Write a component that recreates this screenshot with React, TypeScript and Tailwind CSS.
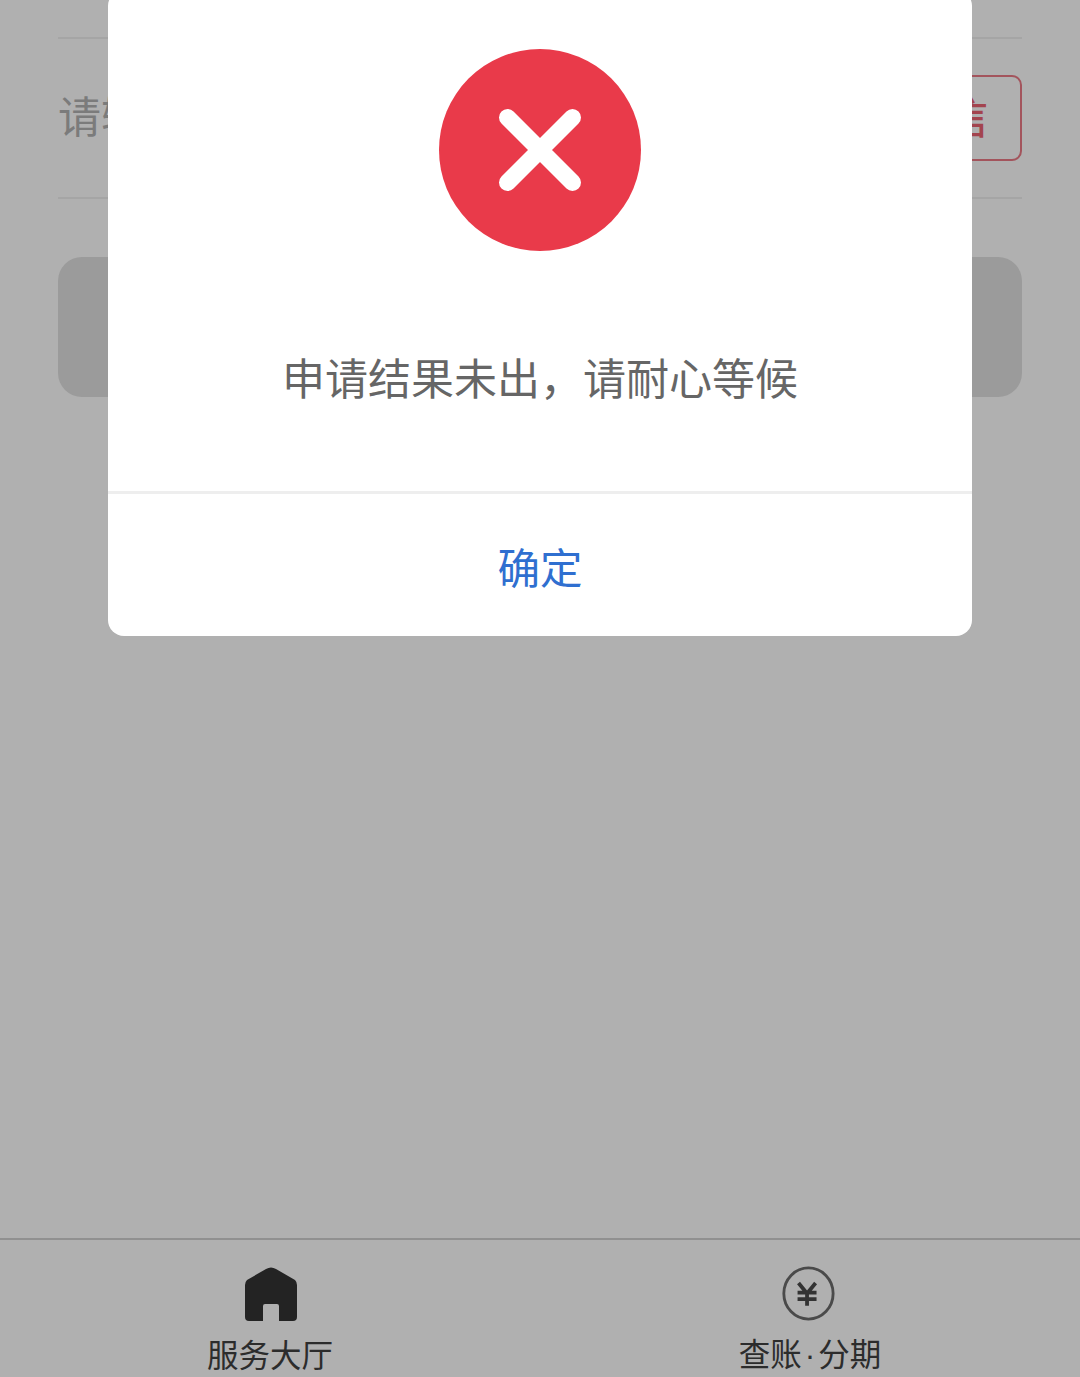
export default function App() {
  const cjk = "font-['Noto_Sans_CJK_SC','Noto_Sans',sans-serif]";
  return (
    <div className={`relative h-[1377px] w-[1080px] overflow-hidden bg-[#b0b0b0] flex flex-col ${cjk}`}>
      <main className="flex-1 px-[58px] pt-[37px]">
        <div className="flex h-[162px] items-center justify-between border-y-2 border-[#a5a5a5]">
          <span className="pb-[8px] text-[43px] leading-none text-[#7b7b7b]">请输入短信验证码</span>
          <button className="flex h-[86px] items-center rounded-[10px] border-2 border-[#a3545c] pl-[34px] pr-[32px] pb-[6px] text-[43px] font-medium leading-none text-[#a3444e]">
            短信
          </button>
        </div>
        <div className="mt-[58px] h-[140px] rounded-[24px] bg-[#9b9b9b]" />
      </main>

      <nav className="flex h-[139px] border-t-2 border-[#909090] text-[#2c2c2c]">
        <div className="flex flex-1 flex-col items-center pt-[26px]">
          <svg className="h-[56px] w-[56px] blur-[0.5px]" viewBox="0 0 56 56" aria-hidden="true">
            <path
              d="M24 3 Q29 0 34 3 L53 14 Q55 16 55 19 V51 Q55 55 51 55 H37 V40 Q37 38 35 38 H23 Q21 38 21 40 V55 H7 Q3 55 3 51 V19 Q3 16 5 14 Z"
              fill="#232323"
            />
          </svg>
          <span className="mt-[9px] text-[31.5px] leading-[44px]">服务大厅</span>
        </div>
        <div className="flex flex-1 flex-col items-center pt-[26px]">
          <svg className="-ml-[4px] h-[58px] w-[58px] blur-[0.5px]" viewBox="0 0 58 58" aria-hidden="true">
            <ellipse cx="29.5" cy="29" rx="26" ry="27" fill="none" stroke="#4a4a4a" strokeWidth="3" />
            <path
              d="M19 18 L28 29 L37 18 M18 28 H38 M18 35 H38 M28 29 V42"
              fill="none"
              stroke="#333333"
              strokeWidth="4"
            />
          </svg>
          <span className="mt-[9px] text-[31.5px] leading-[44px]">
            查账<span className="mx-[3px] font-['Liberation_Sans',sans-serif]">·</span>分期
          </span>
        </div>
      </nav>

      <div className="absolute left-[108px] top-[-10px] flex w-[864px] flex-col rounded-[16px] bg-white">
        <div className="flex h-[504px] flex-col items-center border-b-[3px] border-[#eeeeee] pt-[59px]">
          <svg className="h-[202px] w-[202px]" viewBox="0 0 202 202" aria-hidden="true">
            <circle cx="101" cy="101" r="101" fill="#e93a4a" />
            <path d="M68.5 68.5 L133.5 133.5 M133.5 68.5 L68.5 133.5" stroke="#ffffff" strokeWidth="17" strokeLinecap="round" />
          </svg>
          <p className="mt-[94px] text-[43px] leading-[62px] text-[#666666]">申请结果未出，请耐心等候</p>
        </div>
        <button className="h-[142px] pt-[2px] text-[42.5px] leading-none text-[#2f6fd0]">确定</button>
      </div>
    </div>
  );
}
